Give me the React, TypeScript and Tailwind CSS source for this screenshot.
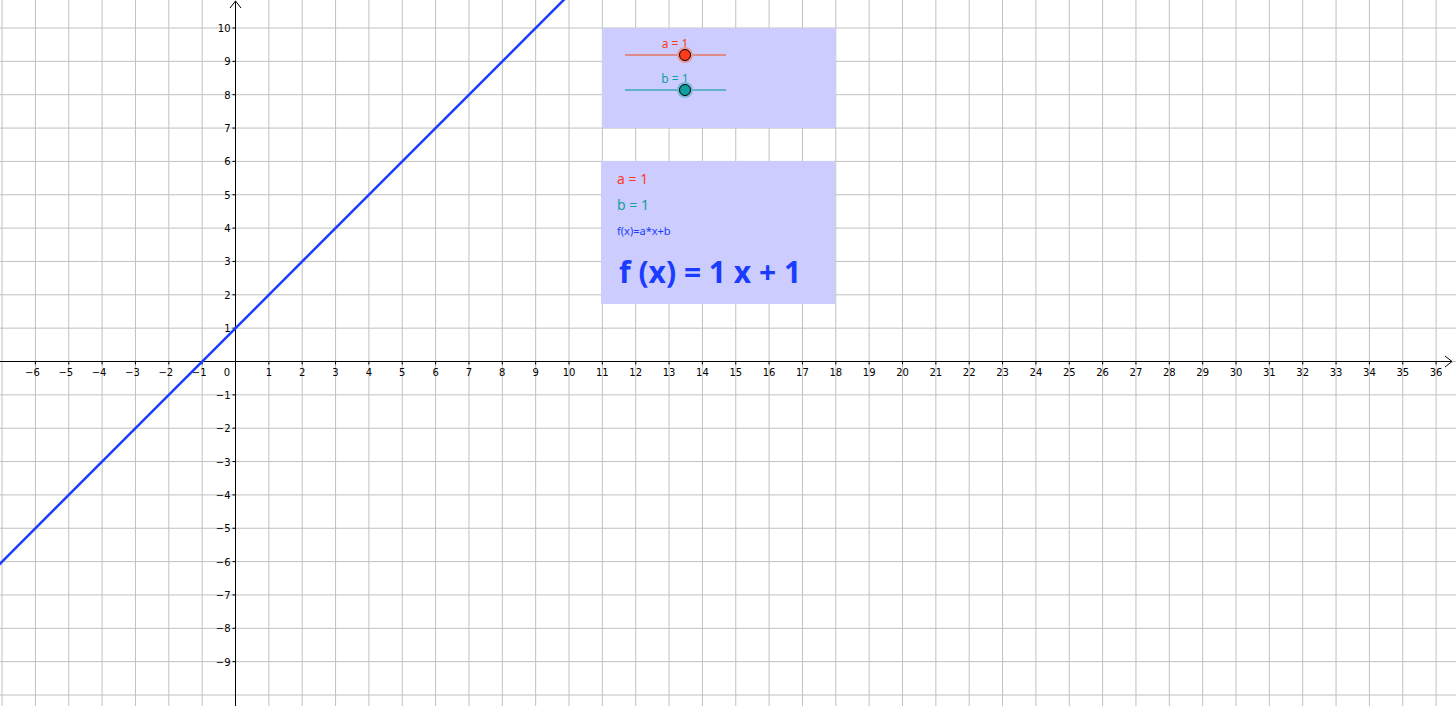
const U = 33.35;
const OX = 235.5;
const OY = 361.5;

function Graph() {
  const vx: number[] = [];
  for (let k = -8; k <= 37; k++) vx.push(OX + k * U);
  const hy: number[] = [];
  for (let k = -11; k <= 11; k++) hy.push(OY + k * U);
  const xl: number[] = [];
  for (let k = -6; k <= 36; k++) if (k !== 0) xl.push(k);
  const yl: number[] = [];
  for (let k = -9; k <= 10; k++) if (k !== 0) yl.push(k);
  const px = (x: number) => OX + x * U;
  const py = (y: number) => OY - y * U;
  return (
    <svg width="1456" height="706" className="absolute inset-0" style={{ fontFamily: "'DejaVu Sans', sans-serif" }}>
      <rect width="1456" height="706" fill="#fff" />
      {vx.map((x) => (
        <line key={"v" + x} x1={x} x2={x} y1={0} y2={706} stroke="#c0c0c0" strokeWidth="1" />
      ))}
      {hy.map((y) => (
        <line key={"h" + y} x1={0} x2={1456} y1={y} y2={y} stroke="#c0c0c0" strokeWidth="1" />
      ))}
      <line x1={0} x2={1452} y1={OY} y2={OY} stroke="#000" strokeWidth="1" />
      <polyline points={`1445,356 1452,${OY} 1445,367`} fill="none" stroke="#000" strokeWidth="1" />
      <line x1={OX} x2={OX} y1={2} y2={706} stroke="#000" strokeWidth="1" />
      <polyline points={`230,8 ${OX},1 241,8`} fill="none" stroke="#000" strokeWidth="1" />
      {xl.map((k) => (
        <g key={"xl" + k}>
          <line x1={px(k)} x2={px(k)} y1={OY} y2={OY + 3} stroke="#000" />
          <text x={px(k) - (k < 0 ? 3 : 0)} y={OY + 14} fontSize="10" textAnchor="middle" fill="#000">
            {k < 0 ? "\u2212" + -k : k}
          </text>
        </g>
      ))}
      <text x={227} y={OY + 14} fontSize="10" textAnchor="middle" fill="#000">0</text>
      {yl.map((k) => (
        <g key={"yl" + k}>
          <line x1={OX - 3} x2={OX} y1={py(k)} y2={py(k)} stroke="#000" />
          <text x={OX - 5} y={py(k) + 4} fontSize="10" textAnchor="end" fill="#000">
            {k < 0 ? "\u2212" + -k : k}
          </text>
        </g>
      ))}
      <line x1={px(-7.2)} y1={py(-6.2)} x2={px(11)} y2={py(12)} stroke="#1a3cff" strokeWidth="2.5" />
    </svg>
  );
}

function Slider({ label, color, line, halo, top }: { label: string; color: string; line: string; halo: string; top: number }) {
  return (
    <div className="absolute left-0 w-full" style={{ top }}>
      <div className="absolute left-[73px] -translate-x-1/2 text-[12px]" style={{ color }}>{label}</div>
      <div className="absolute left-[23px] top-[19px] h-[2px] w-[101px]" style={{ background: line }} />
      <div className="absolute left-[75px] top-[12px] h-[16px] w-[16px] rounded-full" style={{ background: halo }} />
      <div className="absolute left-[77px] top-[14px] h-[12px] w-[12px] rounded-full border border-black" style={{ background: color }} />
    </div>
  );
}

export default function App() {
  return (
    <div className="relative h-[706px] w-[1456px] overflow-hidden bg-white font-['DejaVu_Sans',sans-serif]">
      <Graph />
      <div className="absolute left-[602px] top-[28px] h-[100px] w-[234px] bg-[#ccccff]">
        <Slider label="a = 1" color="#ff3b1a" line="#e08a8a" halo="#e59a9a" top={7} />
        <Slider label="b = 1" color="#0fa0a0" line="#5fb0cc" halo="#7ab8d8" top={42} />
      </div>
      <div className="absolute left-[601px] top-[161px] h-[143px] w-[234px] bg-[#ccccff]">
        <div className="absolute left-[16px] top-[7px] text-[14px] text-[#ff3b1a]">a = 1</div>
        <div className="absolute left-[16px] top-[33px] text-[14px] text-[#0fa0a0]">b = 1</div>
        <div className="absolute left-[16px] top-[62px] text-[11px] text-[#1a3cff]">f(x)=a*x+b</div>
        <div className="absolute left-[18px] top-[88px] whitespace-nowrap text-[30px] font-bold text-[#1a3cff]">f (x) = 1 x + 1</div>
      </div>
    </div>
  );
}
